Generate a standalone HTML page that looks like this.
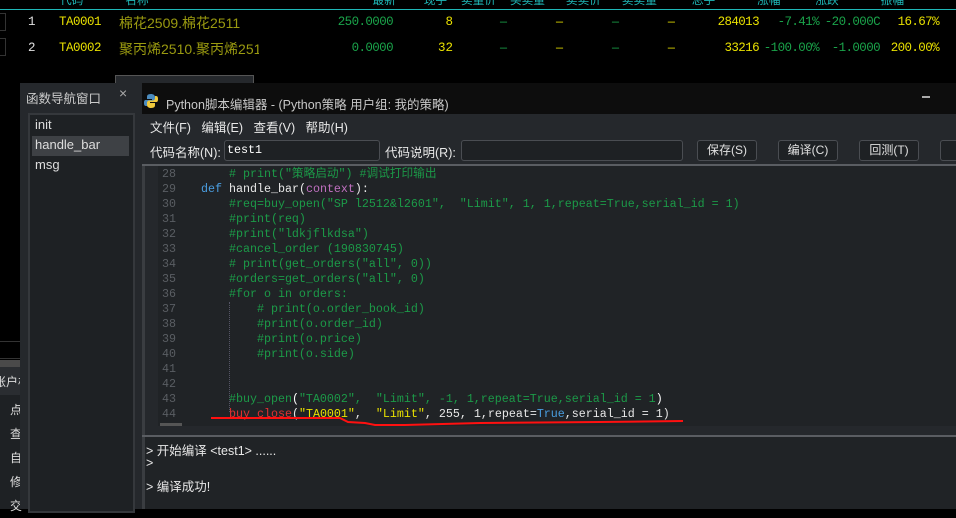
<!DOCTYPE html>
<html><head><meta charset="utf-8"><style>
*{margin:0;padding:0;box-sizing:border-box}
body{width:956px;height:509px;overflow:hidden;background:#000;position:relative;font-family:"Liberation Sans","Noto Sans CJK SC",sans-serif}
.a{position:absolute;white-space:pre}
.m{font-family:"Liberation Mono","Noto Sans CJK SC",monospace;font-size:12.5px}
.g{color:#1aa34a}.y{color:#e8e000}.w{color:#e0e0e0}
.code{position:absolute;white-space:pre;font-family:"Liberation Mono","Noto Sans CJK SC",monospace;font-size:11.67px;color:#1c9a48;line-height:15px}
.ln{position:absolute;left:158px;width:18px;text-align:right;font-family:"Liberation Mono",monospace;font-size:11.67px;color:#5a5e63;line-height:15px}
.btn{position:absolute;top:140px;height:21px;width:60px;border:1px solid #4a4d52;border-radius:3px;background:#1e2124;color:#e0e0e0;font-size:12px;text-align:center;line-height:19px}
</style></head><body>
<div class="a" style="left:0;top:9px;width:956px;height:1px;background:#1fb8b8"></div>
<div class="a m" style="left:60px;top:-9px;color:#1fb8b8;font-size:11.67px">代码      名称                                最新    现手  卖量价  买卖量   卖卖价   卖卖量     总手      涨幅     涨跌      振幅</div>
<div class="a" style="left:0;top:13px;width:6px;height:18px;border:1px solid #333;border-left:none"></div>
<div class="a" style="left:0;top:38px;width:6px;height:18px;border:1px solid #333;border-left:none"></div>
<div class="a m w" style="left:28px;top:15px">1</div>
<div class="a m w" style="left:28px;top:41px">2</div>
<div class="a m y" style="left:59px;top:15px;letter-spacing:-0.5px">TA0001</div>
<div class="a m y" style="left:59px;top:41px;letter-spacing:-0.5px">TA0002</div>
<div class="a" style="left:119px;top:13px;font-size:14px;color:#9a9a10">棉花2509.棉花2511</div>
<div class="a" style="left:119px;top:39px;font-size:14px;color:#9a9a10;width:140px;overflow:hidden">聚丙烯2510.聚丙烯2511</div>
<div class="a m g" style="left:300px;top:15px;width:93px;text-align:right;letter-spacing:-0.6px">250.0000</div>
<div class="a m g" style="left:300px;top:41px;width:93px;text-align:right;letter-spacing:-0.6px">0.0000</div>
<div class="a m y" style="left:420px;top:15px;width:33px;text-align:right">8</div>
<div class="a m y" style="left:420px;top:41px;width:33px;text-align:right">32</div>
<div class="a m" style="left:500px;top:15px;font-size:11.67px"><span class="g">—</span>       <span class="y">—</span>       <span class="g">—</span>       <span class="y">—</span></div>
<div class="a m" style="left:500px;top:41px;font-size:11.67px"><span class="g">—</span>       <span class="y">—</span>       <span class="g">—</span>       <span class="y">—</span></div>
<div class="a m y" style="left:680px;top:15px;width:79px;text-align:right;letter-spacing:-0.6px">284013</div>
<div class="a m y" style="left:680px;top:41px;width:79px;text-align:right;letter-spacing:-0.6px">33216</div>
<div class="a m g" style="left:750px;top:15px;width:69px;text-align:right;letter-spacing:-0.6px">-7.41%</div>
<div class="a m g" style="left:750px;top:41px;width:69px;text-align:right;letter-spacing:-0.6px">-100.00%</div>
<div class="a m g" style="left:820px;top:15px;width:60px;text-align:right;overflow:hidden;letter-spacing:-0.6px">-20.000C</div>
<div class="a m g" style="left:820px;top:41px;width:60px;text-align:right;letter-spacing:-0.6px">-1.0000</div>
<div class="a m y" style="left:870px;top:15px;width:69px;text-align:right;letter-spacing:-0.6px">16.67%</div>
<div class="a m y" style="left:870px;top:41px;width:69px;text-align:right;letter-spacing:-0.6px">200.00%</div>
<div class="a" style="left:115px;top:75px;width:139px;height:10px;border:1px solid #555;border-bottom:none;background:#25282c"></div>
<div class="a" style="left:0;top:341px;width:20px;height:18px;border-top:1px solid #333;border-bottom:1px solid #333"></div>
<div class="a" style="left:0;top:360px;width:20px;height:7px;background:#4a4a4a"></div>
<div class="a" style="left:0;top:367px;width:20px;height:142px;background:#1e2124"></div>
<div class="a" style="left:0;top:367px;width:20px;height:28px;background:#2a2d31"></div>
<div class="a" style="left:-6px;top:373px;font-size:12px;color:#ddd">账户栏</div>
<div class="a" style="left:10px;top:398px;font-size:12px;color:#ddd;line-height:24px;white-space:normal;width:12px">点查自修交</div>
<div class="a" style="left:20px;top:83px;width:122px;height:426px;background:#25282c"></div>
<div class="a" style="left:26px;top:88px;font-size:12.5px;color:#ccc">函数导航窗口</div>
<div class="a" style="left:119px;top:85px;font-size:14px;color:#aaa">×</div>
<div class="a" style="left:28px;top:113px;width:107px;height:400px;background:#1e2124;border:2px solid #35383c"></div>
<div class="a" style="left:35px;top:117px;font-size:13px;color:#ddd">init</div>
<div class="a" style="left:32px;top:136px;width:97px;height:20px;background:#3e4145"></div>
<div class="a" style="left:35px;top:137px;font-size:13px;color:#ddd">handle_bar</div>
<div class="a" style="left:35px;top:157px;font-size:13px;color:#ddd">msg</div>
<div class="a" style="left:142px;top:83px;width:814px;height:31px;background:#0d0d0d"></div>
<svg class="a" style="left:143px;top:93px" width="16" height="16" viewBox="0 0 16 16"><path d="M8 1C4 1 4 3 4 4v2h5v1H2.5C1 7 1 9 1 10s0 3 2 3h1v-2c0-1.5 1-2.5 2.5-2.5h3C11 8.5 12 7.5 12 6V4c0-2-2-3-4-3z" fill="#4b8bbe"/><path d="M8 15c4 0 4-2 4-3v-2H7V9h6.5C15 9 15 7 15 6s0-3-2-3h-1v2c0 1.5-1 2.5-2.5 2.5h-3C5 7.5 4 8.5 4 10v2c0 2 2 3 4 3z" fill="#f0c93c"/></svg>
<div class="a" style="left:166px;top:94px;font-size:12.5px;color:#c8c8c8">Python脚本编辑器 - (Python策略 用户组: 我的策略)</div>
<div class="a" style="left:922px;top:96px;width:8px;height:2px;background:#aaa"></div>
<div class="a" style="left:142px;top:114px;width:814px;height:395px;background:#25282c"></div>
<div class="a" style="left:150px;top:117px;font-size:12.5px;color:#e8e8e8">文件(F)   编辑(E)   查看(V)   帮助(H)</div>
<div class="a" style="left:150px;top:142px;font-size:12.5px;color:#e8e8e8">代码名称(N):</div>
<div class="a" style="left:224px;top:140px;width:156px;height:21px;border:1px solid #4a4d52;border-radius:3px;background:#1e2124"></div>
<div class="a m" style="left:227px;top:143px;color:#fff;font-size:11.67px">test1</div>
<div class="a" style="left:385px;top:142px;font-size:12.5px;color:#e8e8e8">代码说明(R):</div>
<div class="a" style="left:461px;top:140px;width:222px;height:21px;border:1px solid #4a4d52;border-radius:3px;background:#1e2124"></div>
<div class="btn" style="left:697px">保存(S)</div>
<div class="btn" style="left:778px">编译(C)</div>
<div class="btn" style="left:859px">回测(T)</div>
<div class="btn" style="left:940px">运</div>
<div class="a" style="left:142px;top:164px;width:814px;height:2px;background:#5a5d62"></div>
<div class="a" style="left:142px;top:166px;width:3px;height:343px;background:#3a3d41"></div>
<div class="a" style="left:145px;top:166px;width:811px;height:260px;background:#202326"></div>
<div class="a" style="left:145px;top:166px;width:13px;height:260px;background:#25282c"></div>
<div class="a" style="left:160px;top:423px;width:22px;height:3px;background:#555"></div>
<div class="ln" style="top:167px">28<br>29<br>30<br>31<br>32<br>33<br>34<br>35<br>36<br>37<br>38<br>39<br>40<br>41<br>42<br>43<br>44</div>
<div class="a" style="left:229px;top:302px;height:110px;border-left:1px dotted #556"></div>
<div class="code" style="left:201px;top:167px">    # print("策略启动") #调试打印输出
<span style="color:#4a9ee0">def</span> <span style="color:#e8e8e8">handle_bar(</span><span style="color:#c070c0">context</span><span style="color:#e8e8e8">):</span>
    #req=buy_open("SP l2512&amp;l2601",  "Limit", 1, 1,repeat=True,serial_id = 1)
    #print(req)
    #print("ldkjflkdsa")
    #cancel_order (190830745)
    # print(get_orders("all", 0))
    #orders=get_orders("all", 0)
    #for o in orders:
        # print(o.order_book_id)
        #print(o.order_id)
        #print(o.price)
        #print(o.side)


    #buy_open<span style="color:#fff">(</span>"TA0002",  "Limit", -1, 1,repeat=True,serial_id = 1<span style="color:#fff">)</span>
    <span style="color:#e03030">buy_close</span><span style="color:#e8e8e8">(</span><span style="color:#e8e000">"TA0001"</span><span style="color:#e8e8e8">, </span> <span style="color:#e8e000">"Limit"</span><span style="color:#e8e8e8">, 255, 1,repeat=</span><span style="color:#4a9ee0">True</span><span style="color:#e8e8e8">,serial_id = 1)</span></div>
<svg class="a" style="left:0;top:0" width="956" height="509"><path d="M211 418 L300 418 L340 418 L348 422 L365 423 L375 425 L405 425 L480 423 L600 422 L683 421" stroke="#ff1010" stroke-width="2" fill="none"/></svg>
<div class="a" style="left:142px;top:435px;width:814px;height:2px;background:#5a5d62"></div>
<div class="a" style="left:142px;top:437px;width:814px;height:72px;background:#202326"></div>
<div class="a" style="left:142px;top:437px;width:3px;height:72px;background:#3a3d41"></div>
<div class="a" style="left:146px;top:445px;font-size:12.5px;color:#e8e8e8;line-height:12px">&gt; 开始编译 &lt;test1&gt; ......<br>&gt;<br><br>&gt; 编译成功!</div>
</body></html>
